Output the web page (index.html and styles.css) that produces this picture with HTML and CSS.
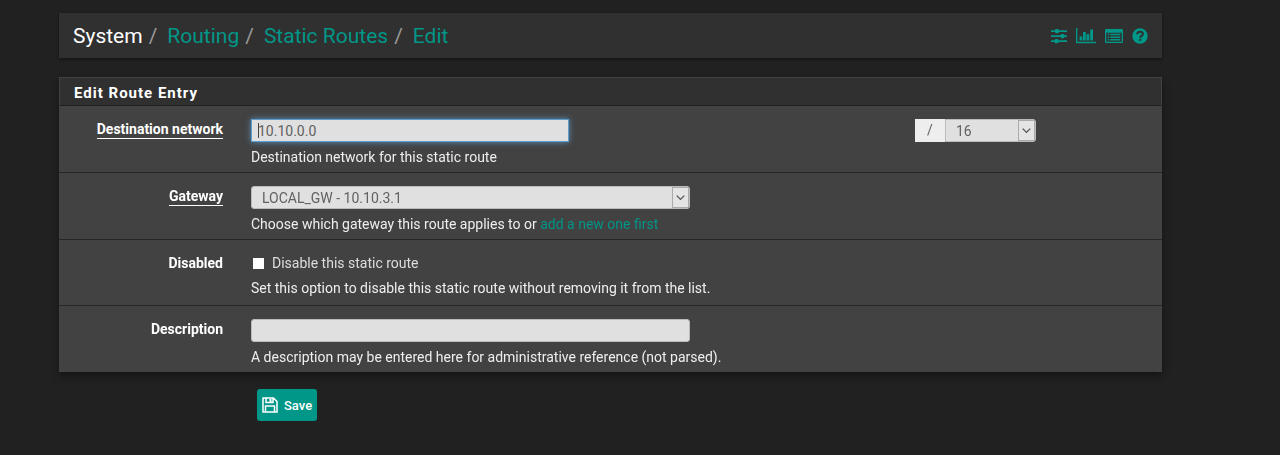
FILE: index.html
```html
<!DOCTYPE html>
<html lang="en">
<head>
    <meta charset="UTF-8">
    <meta name="viewport" content="width=device-width, initial-scale=1.0">
    <title>System: Routing: Static Routes: Edit</title>
    <link rel="stylesheet" href="styles.css">
</head>
<body>
    <div class="container">
        <header class="header">
            <ol class="breadcrumb">
                <li>System</li>
                <li><a href="#">Routing</a></li>
                <li><a href="#">Static Routes</a></li>
                <li><a href="#">Edit</a></li>
            </ol>
            <nav class="context-links">
                <a href="#" aria-label="Related settings">
                    <svg width="16" height="16" viewBox="0 0 16 16">
                        <path d="M0 2.200h16v1.900H0zM0 7.200h16v1.900H0zM0 12.200h16v1.900H0z"/>
                        <rect x="4" y="1" width="4" height="4.300" rx="1.200"/>
                        <rect x="9.500" y="6" width="4" height="4.300" rx="1.200"/>
                        <rect x="3.500" y="11" width="4" height="4.300" rx="1.200"/>
                    </svg>
                </a>
                <a href="#" aria-label="Status graph">
                    <svg width="20" height="16" viewBox="0 0 20 16">
                        <path d="M0 0h1.400v13.700H20V15.200H0zM3.500 8.500h2.800v4H3.500zM7 4h2.800v8.500H7zM10.500 6h2.800v6.500h-2.800zM14.200 1.500H17v11h-2.800z"/>
                    </svg>
                </a>
                <a href="#" aria-label="Log entries">
                    <svg width="18" height="16" viewBox="0 0 18 16">
                        <path fill-rule="evenodd" d="M1 1h16a1 1 0 0 1 1 1v12a1 1 0 0 1-1 1H1a1 1 0 0 1-1-1V2a1 1 0 0 1 1-1zM1.300 4.800v8.900h15.400V4.800z"/>
                        <path d="M2.800 5.800h1.500v1.500H2.800zM5.300 5.800h9.900v1.500H5.300zM2.800 8.400h1.500v1.500H2.800zM5.300 8.400h9.900v1.500H5.300zM2.800 11h1.500v1.500H2.800zM5.300 11h9.900v1.500H5.300z"/>
                    </svg>
                </a>
                <a href="#" aria-label="Help">
                    <svg width="16" height="16" viewBox="0 0 16 16">
                        <circle cx="8" cy="8" r="7.700"/>
                        <path class="icon-cut" d="M5.200 6.200C5.200 4.500 6.400 3.700 8 3.700s2.900.9 2.900 2.300c0 1.800-2.700 1.900-2.700 3.700"/>
                        <path class="icon-cut" d="M8.200 10.800v2"/>
                    </svg>
                </a>
            </nav>
        </header>

        <form>
            <section class="panel">
                <h2 class="panel-heading">Edit Route Entry</h2>
                <div class="form-group">
                    <label class="control-label required" for="network"><span>Destination network</span></label>
                    <div class="field">
                        <div class="address-row">
                            <input class="form-control address" type="text" id="network" value="10.10.0.0" autofocus>
                            <div class="input-group">
                                <label class="addon" for="mask">/</label>
                                <div class="select-wrap">
                                    <select class="form-control" id="mask">
                                        <option>16</option>
                                    </select>
                                    <svg class="arrow" viewBox="0 0 16 20"><path d="M4 8l4 4 4-4"/></svg>
                                </div>
                            </div>
                        </div>
                        <p class="help-block">Destination network for this static route</p>
                    </div>
                </div>
                <div class="form-group">
                    <label class="control-label required" for="gateway"><span>Gateway</span></label>
                    <div class="field">
                        <div class="select-wrap wide">
                            <select class="form-control" id="gateway">
                                <option>LOCAL_GW - 10.10.3.1</option>
                            </select>
                            <svg class="arrow" viewBox="0 0 16 20"><path d="M4 8l4 4 4-4"/></svg>
                        </div>
                        <p class="help-block">Choose which gateway this route applies to or <a href="#">add a new one first</a></p>
                    </div>
                </div>
                <div class="form-group">
                    <span class="control-label">Disabled</span>
                    <div class="field">
                        <label class="checkbox"><input type="checkbox" id="disabled">Disable this static route</label>
                        <p class="help-block">Set this option to disable this static route without removing it from the list.</p>
                    </div>
                </div>
                <div class="form-group">
                    <label class="control-label" for="descr">Description</label>
                    <div class="field">
                        <input class="form-control wide" type="text" id="descr">
                        <p class="help-block">A description may be entered here for administrative reference (not parsed).</p>
                    </div>
                </div>
            </section>
            <button class="btn" type="submit">
                <svg width="16" height="16" viewBox="0 0 16 16">
                    <path d="M1 1h10.500L15 4.500V15H1zM4 1v4.500h7V1M3.500 15V9h9v6"/>
                    <path class="solid" d="M7.500 2h2v3h-2z"/>
                </svg>
                Save
            </button>
        </form>
    </div>
</body>
</html>
```

FILE: styles.css
```css
* {
    box-sizing: border-box;
}

body {
    margin: 0;
    background-color: #212121;
    color: #eee;
    font-family: Roboto, sans-serif;
    font-size: 14px;
    line-height: 18px;
}

a {
    color: #009688;
    text-decoration: none;
}

.container {
    margin: 13px 118px 0 59px;
}

.header {
    display: flex;
    justify-content: space-between;
    align-items: center;
    height: 45px;
    padding: 0 14px;
    background-color: #303030;
    box-shadow: 0 1px 3px rgba(0, 0, 0, 0.5);
}

.breadcrumb {
    display: flex;
    margin: 0;
    padding: 0;
    list-style: none;
    color: #fff;
    font-size: 21px;
    line-height: 26px;
}

.breadcrumb li + li::before {
    content: "/";
    padding: 0 10px 0 6px;
    color: #999;
}

.context-links {
    display: flex;
    gap: 9px;
}

.context-links svg {
    display: block;
    fill: #009688;
}

.context-links .icon-cut {
    fill: none;
    stroke: #303030;
    stroke-width: 2;
}

.panel {
    margin-top: 19px;
    background-color: #424242;
    box-shadow: 0 4px 8px rgba(0, 0, 0, 0.4);
}

.panel-heading {
    margin: 0;
    padding: 6px 14px 3px;
    border: 1px solid #424242;
    border-bottom-color: #212121;
    background-color: #303030;
    color: #fff;
    font-size: 15px;
    font-weight: 700;
    letter-spacing: 1px;
}

.form-group {
    display: grid;
    grid-template-columns: 164px 1fr;
    column-gap: 28px;
    min-height: 66px;
    padding: 13px 0 6px;
}

.form-group + .form-group {
    border-top: 1px solid #262626;
}

.control-label {
    padding-top: 1px;
    color: #fff;
    font-weight: 700;
    text-align: right;
}

.required span {
    display: inline-block;
    border-bottom: 1px solid #fff;
    line-height: 17px;
}

.address-row,
.input-group {
    display: flex;
}

.address-row {
    justify-content: space-between;
    padding-right: 126px;
}

.form-control {
    display: block;
    width: 100%;
    height: 23px;
    padding: 0 6px;
    border: 1px solid #bbb;
    border-radius: 3px;
    background-color: #e0e0e0;
    color: #616161;
    font-family: inherit;
    font-size: 14px;
    appearance: none;
}

select.form-control {
    padding-left: 10px;
}

.form-control:focus {
    border-color: #5a9fd0;
    border-radius: 0;
    outline: none;
    box-shadow: 0 0 6px rgba(102, 175, 233, 0.7);
}

.form-control.address {
    max-width: 318px;
}

/* thin caret at the start of the focused address */
.address:focus {
    background-image: linear-gradient(#444, #444);
    background-position: 6px center;
    background-repeat: no-repeat;
    background-size: 1px 15px;
    caret-color: transparent;
}

.wide {
    max-width: 439px;
}

.input-group {
    width: 121px;
}

.input-group .form-control {
    border-radius: 0 3px 3px 0;
}

.addon {
    width: 30px;
    background-color: #eee;
    color: #616161;
    line-height: 23px;
    text-align: center;
}

.select-wrap {
    position: relative;
    flex: 1;
}

/* drop-down arrow box, laid over the right end of the select */
.arrow {
    position: absolute;
    top: 1px;
    right: 1px;
    width: 17px;
    height: 21px;
    border: 1px solid #aaa;
    background-color: #e4e4e4;
    fill: none;
    stroke: #555;
    stroke-width: 1.5;
    pointer-events: none;
}

.help-block {
    margin: 6px 0 0;
}

.checkbox {
    display: flex;
    align-items: center;
    gap: 8px;
    height: 20px;
    color: #ddd;
}

.checkbox input {
    width: 11px;
    height: 11px;
    margin: 0 0 0 2px;
    background-color: #fff;
    appearance: none;
}

.checkbox input:checked {
    border: 3px solid #fff;
    background-color: #009688;
}

.btn {
    display: flex;
    align-items: center;
    gap: 6px;
    height: 32px;
    margin: 17px 0 0 198px;
    padding: 0 5px;
    border: none;
    border-radius: 3px;
    background-color: #009688;
    color: #fff;
    font-family: inherit;
    font-size: 13px;
    font-weight: 500;
    cursor: pointer;
}

.btn svg {
    fill: none;
    stroke: #fff;
    stroke-width: 1.5;
}

.btn .solid {
    fill: #fff;
    stroke: none;
}
```
